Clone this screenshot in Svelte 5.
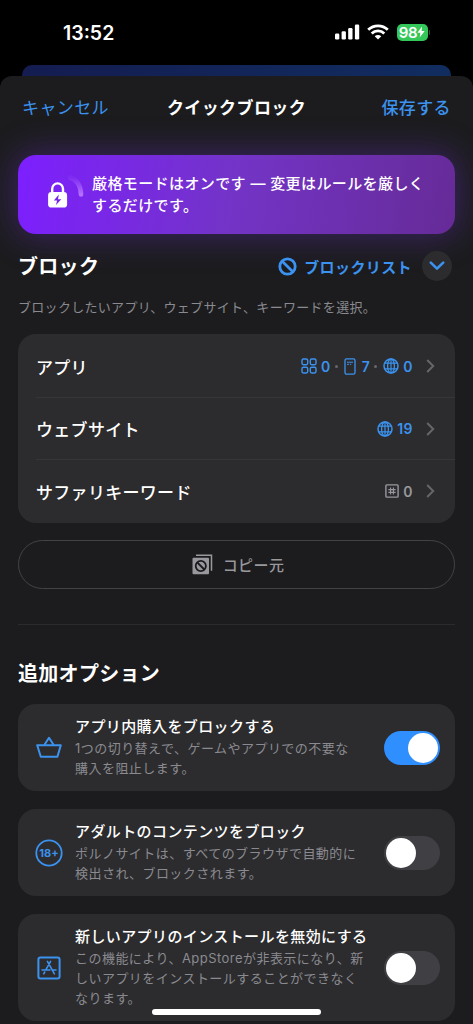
<script>
  const rows = [
    {
      label: 'アプリ',
      counts: [
        { icon: 'grid', value: 0 },
        { icon: 'device', value: 7 },
        { icon: 'globe', value: 0 }
      ]
    },
    { label: 'ウェブサイト', counts: [{ icon: 'globe', value: 19 }] },
    { label: 'サファリキーワード', muted: true, counts: [{ icon: 'hash', value: 0 }] }
  ];

  let options = $state([
    {
      icon: 'basket',
      title: 'アプリ内購入をブロックする',
      lines: ['1つの切り替えで、ゲームやアプリでの不要な', '購入を阻止します。'],
      on: true
    },
    {
      icon: 'adult',
      title: 'アダルトのコンテンツをブロック',
      lines: ['ポルノサイトは、すべてのブラウザで自動的に', '検出され、ブロックされます。'],
      on: false
    },
    {
      icon: 'store',
      title: '新しいアプリのインストールを無効にする',
      lines: ['この機能により、AppStoreが非表示になり、新', 'しいアプリをインストールすることができなく', 'なります。'],
      on: false
    }
  ]);
</script>

{#snippet countIcon(name)}
  {#if name === 'grid'}
    <svg width="16" height="16" viewBox="0 0 16 16" fill="none" stroke="currentColor" stroke-width="1.4">
      <rect x="1" y="1" width="5.7" height="5.7" rx="1.4" />
      <rect x="9.3" y="1" width="5.7" height="5.7" rx="1.4" />
      <rect x="1" y="9.3" width="5.7" height="5.7" rx="1.4" />
      <rect x="9.3" y="9.3" width="5.7" height="5.7" rx="1.4" />
    </svg>
  {:else if name === 'device'}
    <svg class="device" width="12" height="17" viewBox="0 0 12 17" fill="none" stroke="currentColor" stroke-width="1.3">
      <rect x="1" y=".8" width="10" height="15.4" rx="1.6" />
      <path d="M3 4.2h6M3 6.3h2M6 6.3h1.2" stroke-width="1" />
    </svg>
  {:else if name === 'globe'}
    <svg width="16" height="16" viewBox="0 0 16 16" fill="none" stroke="currentColor" stroke-width="1.5">
      <circle cx="8" cy="8" r="7" />
      <ellipse cx="8" cy="8" rx="3.4" ry="7" stroke-width="1.3" />
      <path d="M8 1v14M1.8 5.2h12.4M1.8 10.8h12.4" stroke-width="1.2" />
    </svg>
  {:else}
    <svg width="14" height="14" viewBox="0 0 14 14" fill="none" stroke="currentColor" stroke-width="1.4">
      <rect x=".9" y=".9" width="12.2" height="12.2" rx=".8" />
      <path d="M5.6 3.4v7.2M8.4 3.4v7.2M3.4 5.6h7.2M3.4 8.4h7.2" stroke-width="1.1" />
    </svg>
  {/if}
{/snippet}

<div class="screen">
  <div class="status">
    <span class="time">13:52</span>
    <div class="signals">
      <svg width="25" height="16" viewBox="0 0 25 16" fill="#fff">
        <rect x="0" y="9.6" width="4.3" height="5.9" rx="1.2" />
        <rect x="6.6" y="7.2" width="4.3" height="8.3" rx="1.2" />
        <rect x="13.2" y="4" width="4.3" height="11.5" rx="1.2" />
        <rect x="19.9" y=".5" width="4.3" height="15" rx="1.2" />
      </svg>
      <svg width="22" height="16" viewBox="0 0 22 16" fill="none" stroke="#fff" stroke-width="2.8">
        <path d="M1.2 5.8C6.6.6 15.4.6 20.8 5.8" />
        <path d="M4.7 9.5C8.2 6.1 13.8 6.1 17.3 9.5" />
        <path d="M11 15.6 7.7 12.3C9.6 10.5 12.4 10.5 14.3 12.3Z" fill="#fff" stroke="none" />
      </svg>
      <div class="battery">
        <span>98</span>
        <svg width="8" height="12" viewBox="0 0 8 12" fill="#fff"><path d="M5 .5.4 6.8h3L2.7 11.5 7.7 5H4.6Z" /></svg>
      </div>
      <i class="battery-tip"></i>
    </div>
  </div>

  <div class="back-sheet"></div>

  <div class="sheet">
    <header>
      <button class="cancel">キャンセル</button>
      <h1>クイックブロック</h1>
      <button class="save">保存する</button>
    </header>

    <div class="banner">
      <svg width="40" height="40" viewBox="0 0 40 40" fill="none">
        <defs>
          <linearGradient id="arc" x1="0" y1="0" x2="0" y2="1">
            <stop offset="0" stop-color="#b06bff" stop-opacity=".1" />
            <stop offset="1" stop-color="#b774ff" stop-opacity=".95" />
          </linearGradient>
        </defs>
        <path d="M23 2.5Q33.6 6 34 19.4" stroke="url(#arc)" stroke-width="4.6" stroke-linecap="round" />
        <path d="M5.2 18v-4.2a5.4 5.4 0 0 1 10.8 0V18" stroke="#fff" stroke-width="2.4" />
        <rect x="1.1" y="17" width="19" height="15.6" rx="3.4" fill="#fff" />
        <path d="M11.8 19.6 6.9 25.5h3.2L9 30l5.3-5.8H11Z" fill="#7523e8" />
      </svg>
      <p>厳格モードはオンです — 変更はルールを厳しく<br />するだけです。</p>
    </div>

    <div class="block-head">
      <h2>ブロック</h2>
      <button class="list">
        <svg width="19" height="19" viewBox="0 0 19 19" fill="none" stroke="currentColor" stroke-width="2.8">
          <circle cx="9.5" cy="9.5" r="7.7" />
          <path d="m4.2 4.2 10.6 10.6" />
        </svg>
        <span>ブロックリスト</span>
      </button>
      <button class="expand" aria-label="expand">
        <svg width="16" height="10" viewBox="0 0 16 10" fill="none" stroke="currentColor" stroke-width="2.6" stroke-linecap="round" stroke-linejoin="round">
          <path d="m1.8 1.6 6.2 6 6.2-6" />
        </svg>
      </button>
    </div>
    <p class="hint">ブロックしたいアプリ、ウェブサイト、キーワードを選択。</p>

    <div class="card list-card">
      {#each rows as row}
        <div class="row">
          <span class="row-label">{row.label}</span>
          <div class="counts" class:muted={row.muted}>
            {#each row.counts as count, i}
              {#if i > 0}<i class="dot"></i>{/if}
              {@render countIcon(count.icon)}
              <b>{count.value}</b>
            {/each}
          </div>
          <svg class="chevron" width="9" height="14" viewBox="0 0 9 14" fill="none" stroke="currentColor" stroke-width="2">
            <path d="m1.2 1 6 6-6 6" />
          </svg>
        </div>
      {/each}
    </div>

    <button class="copy">
      <svg width="21" height="21" viewBox="0 0 21 21" fill="none" stroke="currentColor">
        <path d="M4 1.2h15.5v15.5" stroke-width="1.5" />
        <rect x=".5" y="3.7" width="16.5" height="16.5" rx="1" fill="currentColor" stroke="none" />
        <circle cx="8.8" cy="12" r="5.1" stroke="#1c1c1e" stroke-width="1.8" />
        <path d="m5.3 8.5 7 7" stroke="#1c1c1e" stroke-width="1.8" />
      </svg>
      <span>コピー元</span>
    </button>

    <div class="divider"></div>

    <h2 class="extra">追加オプション</h2>

    {#each options as option}
      <div class="card option" class:tall={option.lines.length > 2}>
        <div class="option-icon">
          {#if option.icon === 'basket'}
            <svg width="26" height="23" viewBox="0 0 26 23" fill="none" stroke="currentColor" stroke-width="2" stroke-linejoin="round">
              <path d="M1.2 9.2h23.6l-3.4 11.6H4.8Z" />
              <path d="m8.3 9 4.7-7.2L17.7 9" />
            </svg>
          {:else if option.icon === 'adult'}
            <svg width="28" height="28" viewBox="0 0 28 28" fill="none" stroke="currentColor" stroke-width="1.8">
              <circle cx="14" cy="14" r="12.7" />
              <text x="14" y="18" text-anchor="middle">18+</text>
            </svg>
          {:else}
            <svg width="24" height="24" viewBox="0 0 24 24" fill="none" stroke="currentColor" stroke-width="2" stroke-linecap="round">
              <rect x="1.4" y="1.4" width="21.2" height="21.2" rx="2" />
              <path d="m10.4 5.4 7 12.4M13.6 5.4 8.8 13.8M7.7 16l-1 1.8M5 14h8M16.2 14H19" stroke-width="1.6" />
            </svg>
          {/if}
        </div>
        <div class="option-text">
          <h3>{option.title}</h3>
          <p>
            {#each option.lines as line}<span>{line}</span>{/each}
          </p>
        </div>
        <button class="switch" class:on={option.on} aria-label={option.title} onclick={() => (option.on = !option.on)}>
          <i></i>
        </button>
      </div>
    {/each}
  </div>

  <div class="home"></div>
</div>

<style>
  :global(body) {
    background: #000;
  }

  .screen {
    position: relative;
    display: flex;
    flex-direction: column;
    width: 473px;
    height: 1024px;
    overflow: hidden;
    background: #000;
    color: #fff;
    font-family: Inter, "Noto Sans CJK JP", sans-serif;
  }

  h1, h2, h3, p {
    margin: 0;
  }

  button {
    padding: 0;
    border: 0;
    background: none;
    color: #3b92ef;
    font-family: inherit;
  }

  svg {
    display: block;
    flex: none;
  }

  .status {
    display: flex;
    justify-content: space-between;
    align-items: center;
    box-sizing: border-box;
    height: 65px;
    padding: 0 43px 0 63px;
  }

  .time {
    font-size: 19.5px;
    font-weight: 600;
  }

  .signals {
    display: flex;
    align-items: center;
    margin-top: -1px;
  }

  .signals > svg + svg {
    margin: 0 8px 0 7px;
  }

  .battery {
    display: flex;
    align-items: center;
    justify-content: center;
    width: 31px;
    height: 17px;
    border-radius: 5px;
    background: #34c759;
    font-size: 15px;
    font-weight: 600;
    letter-spacing: -0.3px;
  }

  .battery-tip {
    width: 1.5px;
    height: 5px;
    margin-left: 1px;
    border-radius: 0 2px 2px 0;
    background: #1d5b2e;
  }

  .back-sheet {
    flex: none;
    height: 11px;
    margin: 0 22px;
    border-radius: 10px 10px 0 0;
    background: linear-gradient(90deg, #141c50, #112d60);
  }

  .sheet {
    display: flex;
    flex-direction: column;
    flex: 1;
    box-sizing: border-box;
    padding: 0 18px;
    border-radius: 12px 12px 0 0;
    background: #1c1c1e;
  }

  header {
    display: grid;
    grid-template-columns: 1fr auto 1fr;
    align-items: center;
    height: 63px;
    padding: 0 4px;
  }

  header button,
  header h1 {
    font-size: 17px;
    line-height: 24px;
    letter-spacing: 0.4px;
  }

  header h1 {
    font-weight: 600;
  }

  .cancel {
    justify-self: start;
  }

  .save {
    justify-self: end;
    font-weight: 500;
  }

  .banner {
    display: flex;
    align-items: center;
    box-sizing: border-box;
    height: 79px;
    margin-top: 16px;
    padding-left: 29px;
    border-radius: 18px;
    background: linear-gradient(100deg, #7d1fff, #7334c6 50%, #662b97);
    box-shadow: 0 0 32px 4px rgba(110, 50, 210, 0.36);
  }

  .banner p {
    margin-left: 5px;
    font-size: 15px;
    font-weight: 500;
    line-height: 22px;
    letter-spacing: 0.4px;
    white-space: nowrap;
  }

  .block-head {
    display: flex;
    align-items: center;
    height: 64px;
  }

  h2 {
    padding-top: 2px;
    font-size: 20px;
    font-weight: 600;
    line-height: 28px;
    letter-spacing: 0.3px;
  }

  .list {
    display: flex;
    align-items: center;
    gap: 7px;
    margin-left: auto;
    font-size: 15px;
    font-weight: 600;
    letter-spacing: 0.4px;
  }

  .expand {
    display: flex;
    align-items: center;
    justify-content: center;
    width: 30px;
    height: 30px;
    margin: 0 3px 0 10px;
    border-radius: 50%;
    background: #2c2c2e;
  }

  .hint {
    height: 36px;
    font-size: 13px;
    line-height: 18px;
    letter-spacing: 0.3px;
    color: #8a8a90;
  }

  .card {
    flex: none;
    border-radius: 18px;
    background: #2c2c2e;
  }

  .row {
    display: flex;
    align-items: center;
    box-sizing: border-box;
    height: 62px;
    margin-left: 18px;
    padding-right: 20px;
    border-bottom: 1px solid #363638;
  }

  .row:first-child {
    height: 64px;
    padding-top: 1px;
  }

  .row:last-child {
    height: 63px;
    padding-bottom: 1px;
    border-bottom: 0;
  }

  .row-label {
    font-size: 17px;
    font-weight: 500;
    letter-spacing: 0.3px;
  }

  .counts {
    display: flex;
    align-items: center;
    margin-left: auto;
    color: #3b92ef;
    font-size: 14px;
  }

  .counts b {
    margin-left: 4px;
    font-weight: 600;
    letter-spacing: 0.5px;
  }

  .counts .device + b {
    margin-left: 6px;
  }

  .muted {
    color: #98989d;
  }

  .dot {
    width: 3px;
    height: 3px;
    margin: 0 6px 0 4px;
    border-radius: 50%;
    background: #68686c;
  }

  .chevron {
    margin-left: 13px;
    color: #66666a;
  }

  .copy {
    display: flex;
    flex: none;
    align-items: center;
    justify-content: center;
    gap: 10px;
    box-sizing: border-box;
    height: 49px;
    margin-top: 17px;
    padding-left: 3px;
    border: 1px solid #434346;
    border-radius: 25px;
    color: #98989d;
    font-size: 15px;
    font-weight: 500;
    letter-spacing: 0.4px;
  }

  .divider {
    height: 1px;
    margin: 35px 0 33px;
    background: #2b2b2d;
  }

  .extra {
    margin-bottom: 16px;
  }

  .option {
    display: flex;
    align-items: center;
    box-sizing: border-box;
    height: 87px;
    margin-bottom: 18px;
    padding: 0 15px;
  }

  .tall {
    height: 107px;
    margin-bottom: 0;
  }

  .option-icon {
    display: flex;
    justify-content: center;
    width: 31px;
    color: #3b92ef;
  }

  .option-icon text {
    fill: currentColor;
    stroke: none;
    font-size: 11px;
    font-weight: 700;
  }

  .option-text {
    margin: -1px 0 0 11px;
  }

  h3 {
    font-size: 15px;
    font-weight: 500;
    line-height: 22px;
    letter-spacing: 0.4px;
    white-space: nowrap;
  }

  .option-text p {
    font-size: 13px;
    line-height: 20px;
    letter-spacing: 0.46px;
    color: #8a8a90;
    white-space: nowrap;
  }

  .option-text span {
    display: block;
  }

  .switch {
    display: flex;
    align-items: center;
    box-sizing: border-box;
    width: 56px;
    height: 34px;
    margin-left: auto;
    padding: 2px;
    border-radius: 17px;
    background: #404044;
  }

  .switch i {
    width: 30px;
    height: 30px;
    border-radius: 50%;
    background: #fff;
  }

  .on {
    justify-content: flex-end;
    background: #2f8fff;
  }

  .home {
    position: absolute;
    left: 152px;
    bottom: 9px;
    width: 169px;
    height: 6px;
    border-radius: 3px;
    background: #fff;
  }
</style>
